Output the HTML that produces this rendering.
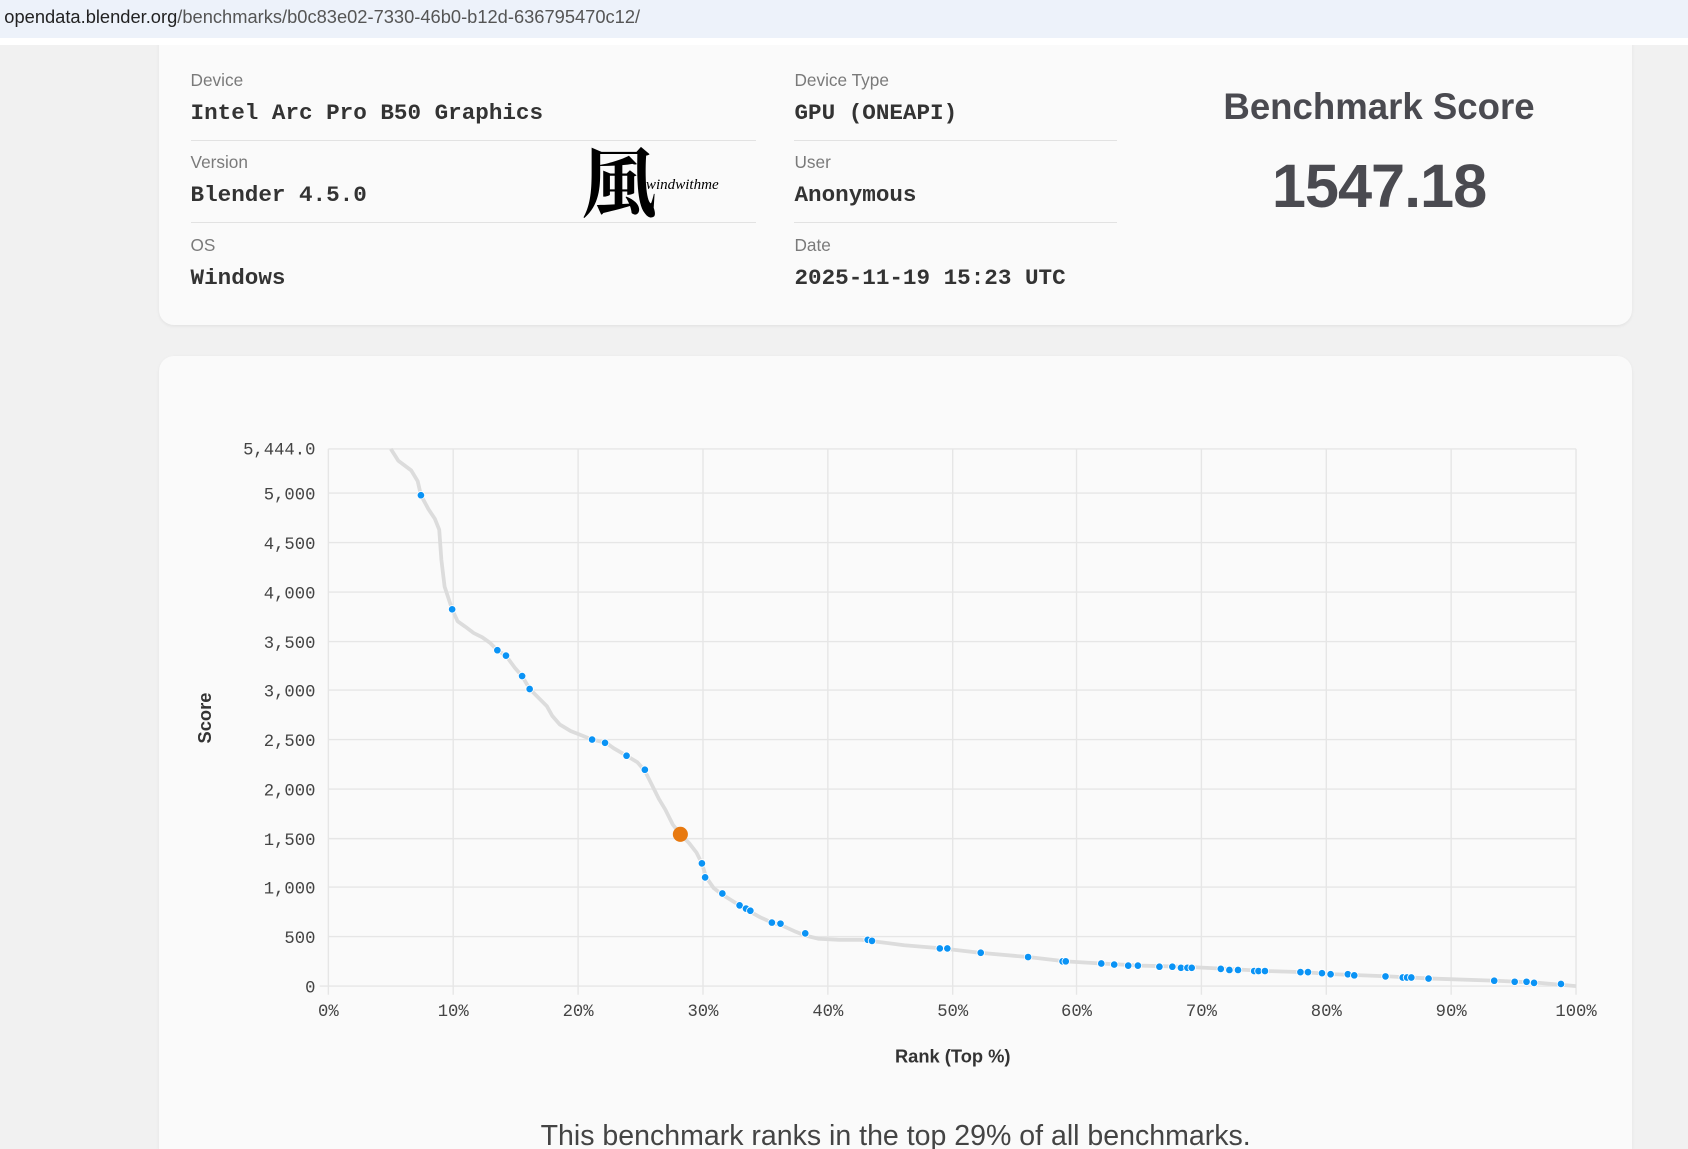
<!DOCTYPE html>
<html style="overflow:hidden;height:1149px"><head><meta charset="utf-8"><style>
html,body{margin:0;padding:0;}
body{width:1568px;height:1067px;overflow:hidden;background:#f1f1f1;zoom:1.07653;font-family:"Liberation Sans",sans-serif;position:relative;}
.url{position:absolute;left:0;top:0;width:1568px;height:35px;background:#edf2fa;font-size:17px;color:#222;line-height:32px;padding-left:4px;box-sizing:border-box;z-index:2}
.url span{color:#555}
.wl{position:absolute;left:0;top:35px;width:1568px;height:7px;background:#fff;z-index:2}
.card{position:absolute;left:148px;width:1368px;background:#fafafa;border-radius:14px;box-shadow:0 1px 3px rgba(0,0,0,.06);}
.lab{position:absolute;font-size:16px;color:#7a7a7a;}
.val{position:absolute;font-family:"Liberation Mono","DejaVu Sans Mono",monospace;font-size:21px;color:#333;font-weight:600;}
.sep{position:absolute;height:1px;background:#e2e2e2;}
.t{font-family:"Liberation Mono","DejaVu Sans Mono",monospace;font-size:16px;fill:#444;}
</style></head><body>
<div class="url">opendata.blender.org<span>/benchmarks/b0c83e02-7330-46b0-b12d-636795470c12/</span></div>
<div class="wl"></div>
<div class="card" style="top:20px;height:282px;"></div>
<div class="lab" style="left:177px;top:65px">Device</div>
<div class="val" style="left:177px;top:93px">Intel Arc Pro B50 Graphics</div>
<div class="sep" style="left:177px;top:130px;width:525px"></div>
<div class="lab" style="left:177px;top:141px">Version</div>
<div class="val" style="left:177px;top:169px">Blender 4.5.0</div>
<div class="sep" style="left:177px;top:206px;width:525px"></div>
<div class="lab" style="left:177px;top:218px">OS</div>
<div class="val" style="left:177px;top:246px">Windows</div>
<div class="lab" style="left:738px;top:65px">Device Type</div>
<div class="val" style="left:738px;top:93px">GPU (ONEAPI)</div>
<div class="sep" style="left:738px;top:130px;width:300px"></div>
<div class="lab" style="left:738px;top:141px">User</div>
<div class="val" style="left:738px;top:169px">Anonymous</div>
<div class="sep" style="left:738px;top:206px;width:300px"></div>
<div class="lab" style="left:738px;top:218px">Date</div>
<div class="val" style="left:738px;top:246px">2025-11-19 15:23 UTC</div>
<div style="position:absolute;left:540px;top:122px;font-family:'Noto Serif CJK SC',serif;font-size:70px;line-height:90px;color:#000;font-weight:bold">風</div>
<div style="position:absolute;left:600px;top:164px;font-family:'Liberation Serif',serif;font-style:italic;font-size:14px;color:#000">windwithme</div>
<div style="position:absolute;left:1080px;width:402px;top:80px;text-align:center;font-size:34px;color:#4a4a50;font-weight:600">Benchmark Score</div>
<div style="position:absolute;left:1080px;width:402px;top:140px;text-align:center;font-size:57px;color:#4a4a50;font-weight:bold;letter-spacing:-1px">1547.18</div>
<div class="card" style="top:331px;height:736px;border-bottom-left-radius:0;border-bottom-right-radius:0"></div>
<svg style="position:absolute;left:0;top:0" width="1568" height="1067">
<g stroke="#e6e6e6" stroke-width="1.3">
<line x1="305" y1="417" x2="1464" y2="417"/><line x1="305" y1="458" x2="1464" y2="458"/><line x1="305" y1="504" x2="1464" y2="504"/><line x1="305" y1="550" x2="1464" y2="550"/><line x1="305" y1="596" x2="1464" y2="596"/><line x1="305" y1="641" x2="1464" y2="641"/><line x1="305" y1="687" x2="1464" y2="687"/><line x1="305" y1="733" x2="1464" y2="733"/><line x1="305" y1="779" x2="1464" y2="779"/><line x1="305" y1="824" x2="1464" y2="824"/><line x1="305" y1="870" x2="1464" y2="870"/><line x1="297" y1="916" x2="1464" y2="916"/>
<line x1="305" y1="417" x2="305" y2="924"/><line x1="421" y1="417" x2="421" y2="924"/><line x1="537" y1="417" x2="537" y2="924"/><line x1="653" y1="417" x2="653" y2="924"/><line x1="769" y1="417" x2="769" y2="924"/><line x1="885" y1="417" x2="885" y2="924"/><line x1="1000" y1="417" x2="1000" y2="924"/><line x1="1116" y1="417" x2="1116" y2="924"/><line x1="1232" y1="417" x2="1232" y2="924"/><line x1="1348" y1="417" x2="1348" y2="924"/><line x1="1464" y1="417" x2="1464" y2="924"/>
</g>
<g class="t" text-anchor="end">
<text x="293" y="422">5,444.0</text><text x="293" y="464">5,000</text><text x="293" y="510">4,500</text><text x="293" y="556">4,000</text><text x="293" y="602">3,500</text><text x="293" y="647">3,000</text><text x="293" y="693">2,500</text><text x="293" y="739">2,000</text><text x="293" y="785">1,500</text><text x="293" y="830">1,000</text><text x="293" y="876">500</text><text x="293" y="922">0</text>
</g>
<g class="t" text-anchor="middle">
<text x="305" y="944">0%</text><text x="421" y="944">10%</text><text x="537" y="944">20%</text><text x="653" y="944">30%</text><text x="769" y="944">40%</text><text x="885" y="944">50%</text><text x="1000" y="944">60%</text><text x="1116" y="944">70%</text><text x="1232" y="944">80%</text><text x="1348" y="944">90%</text><text x="1464" y="944">100%</text>
</g>
<text x="0" y="0" transform="translate(196,667) rotate(-90)" text-anchor="middle" font-family="Liberation Sans,sans-serif" font-size="17" font-weight="600" fill="#333">Score</text>
<text x="885" y="987" text-anchor="middle" font-family="Liberation Sans,sans-serif" font-size="17" font-weight="600" fill="#333">Rank (Top %)</text>
<polyline fill="none" stroke="#dcdcdc" stroke-width="3.5" stroke-linejoin="round" points="363,417 370,428 382,437 388,447 391,460 398,473 404,482 408,492 410,520 413,545 420,566 425,577 432,582 440,588 448,592 455,597 462,604 470,609 478,620 485,628 492,640 500,648 508,656 513,665 520,673 530,679 540,683 550,687 563,690 570,695 582,702 592,708 599,716 605,728 612,742 618,752 625,766 632,775 640,783 647,792 652,802 656,815 663,825 671,831 687,841 697,847 706,852 717,857 727,860 738,865 748,869 760,872 780,873 800,873 808,874 840,878 875,881 910,885 955,889 990,893 1023,895 1060,897 1100,898 1140,900 1175,902 1210,903 1240,905 1290,907 1330,909 1390,911 1430,913 1464,916"/>
<g fill="#0a93f5" stroke="#fff" stroke-width="0.8">
<circle cx="391" cy="460" r="3.5"/><circle cx="420" cy="566" r="3.5"/><circle cx="462" cy="604" r="3.5"/><circle cx="470" cy="609" r="3.5"/><circle cx="485" cy="628" r="3.5"/><circle cx="492" cy="640" r="3.5"/><circle cx="550" cy="687" r="3.5"/><circle cx="562" cy="690" r="3.5"/><circle cx="582" cy="702" r="3.5"/><circle cx="599" cy="715" r="3.5"/><circle cx="652" cy="802" r="3.5"/><circle cx="655" cy="815" r="3.5"/><circle cx="671" cy="830" r="3.5"/><circle cx="687" cy="841" r="3.5"/><circle cx="693" cy="844" r="3.5"/><circle cx="697" cy="846" r="3.5"/><circle cx="717" cy="857" r="3.5"/><circle cx="725" cy="858" r="3.5"/><circle cx="748" cy="867" r="3.5"/><circle cx="806" cy="873" r="3.5"/><circle cx="810" cy="874" r="3.5"/><circle cx="873" cy="881" r="3.5"/><circle cx="880" cy="881" r="3.5"/><circle cx="911" cy="885" r="3.5"/><circle cx="955" cy="889" r="3.5"/><circle cx="987" cy="893" r="3.5"/><circle cx="990" cy="893" r="3.5"/><circle cx="1023" cy="895" r="3.5"/><circle cx="1035" cy="896" r="3.5"/><circle cx="1048" cy="897" r="3.5"/><circle cx="1057" cy="897" r="3.5"/><circle cx="1077" cy="898" r="3.5"/><circle cx="1089" cy="898" r="3.5"/><circle cx="1097" cy="899" r="3.5"/><circle cx="1103" cy="899" r="3.5"/><circle cx="1107" cy="899" r="3.5"/><circle cx="1134" cy="900" r="3.5"/><circle cx="1142" cy="901" r="3.5"/><circle cx="1150" cy="901" r="3.5"/><circle cx="1165" cy="902" r="3.5"/><circle cx="1169" cy="902" r="3.5"/><circle cx="1175" cy="902" r="3.5"/><circle cx="1208" cy="903" r="3.5"/><circle cx="1215" cy="903" r="3.5"/><circle cx="1228" cy="904" r="3.5"/><circle cx="1236" cy="905" r="3.5"/><circle cx="1252" cy="905" r="3.5"/><circle cx="1258" cy="906" r="3.5"/><circle cx="1287" cy="907" r="3.5"/><circle cx="1303" cy="908" r="3.5"/><circle cx="1307" cy="908" r="3.5"/><circle cx="1311" cy="908" r="3.5"/><circle cx="1327" cy="909" r="3.5"/><circle cx="1388" cy="911" r="3.5"/><circle cx="1407" cy="912" r="3.5"/><circle cx="1418" cy="912" r="3.5"/><circle cx="1425" cy="913" r="3.5"/><circle cx="1450" cy="914" r="3.5"/>
</g>
<circle cx="632" cy="775" r="7" fill="#e8790f"/>
</svg>
<div style="position:absolute;left:148px;width:1368px;top:1040px;height:27px;overflow:hidden;text-align:center;font-size:26.5px;line-height:30px;color:#444">This benchmark ranks in the top 29% of all benchmarks.</div>
</body></html>
